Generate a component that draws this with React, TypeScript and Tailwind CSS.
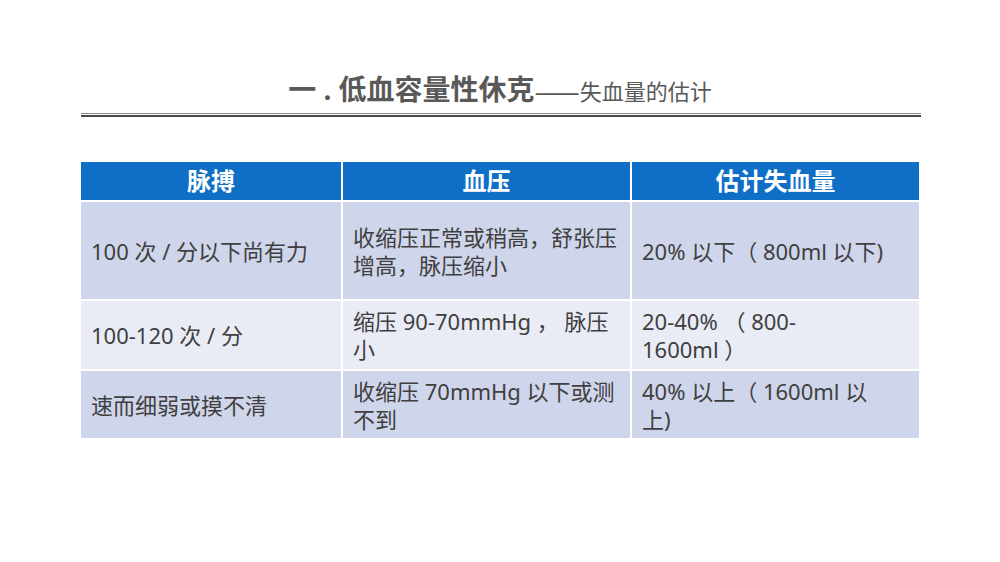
import React from "react";

const rows: { a: React.ReactNode; b: React.ReactNode; c: React.ReactNode; h: string; bg: string }[] = [
  {
    a: "100 次 / 分以下尚有力",
    b: (
      <>
        收缩压正常或稍高，舒张压
        <br />
        增高，脉压缩小
      </>
    ),
    c: "20% 以下（ 800ml 以下)",
    h: "h-[97px]",
    bg: "bg-[#cfd5ea]",
  },
  {
    a: "100-120 次 / 分",
    b: (
      <>
        缩压 90-70mmHg ， 脉压
        <br />
        小
      </>
    ),
    c: (
      <>
        20-40% （ 800-
        <br />
        1600ml ）
      </>
    ),
    h: "h-[68px]",
    bg: "bg-[#e9ebf5]",
  },
  {
    a: "速而细弱或摸不清",
    b: (
      <>
        收缩压 70mmHg 以下或测
        <br />
        不到
      </>
    ),
    c: (
      <>
        40% 以上（ 1600ml 以
        <br />
        上)
      </>
    ),
    h: "h-[67px]",
    bg: "bg-[#cfd5ea]",
  },
];

export default function App() {
  return (
    <div
      className="w-[1000px] h-[562px] bg-white overflow-hidden pt-[70px]"
      style={{ fontFamily: '"Noto Sans", "Noto Sans CJK SC", sans-serif' }}
    >
      <div className="h-[38px] flex items-baseline justify-center text-[#595959]">
        <span className="text-[28px] font-bold leading-[38px]">一 . 低血容量性休克</span>
        <span
          className="text-[22px] leading-[38px]"
          style={{ fontFamily: '"Noto Sans CJK SC", sans-serif' }}
        >
          <span className="text-[27px] relative top-[2px]">——</span>失血量的估计
        </span>
      </div>
      <div className="ml-[81px] w-[840px] mt-[5px]">
        <div className="h-[1px] bg-[#8a8a8a]" />
        <div className="h-[1px]" />
        <div className="h-[2px] bg-[#4a4a4a]" />
      </div>
      <div className="ml-[81px] mt-[45px] w-[838px] grid grid-cols-[260px_287px_287px] gap-[2px] bg-white text-[#3f3f3f] text-[22px] leading-[28px]">
        <div className="h-[38px] bg-[#0f6fc6] text-white font-bold text-[24px] flex items-center justify-center">脉搏</div>
        <div className="h-[38px] bg-[#0f6fc6] text-white font-bold text-[24px] flex items-center justify-center">血压</div>
        <div className="h-[38px] bg-[#0f6fc6] text-white font-bold text-[24px] flex items-center justify-center">估计失血量</div>
        {rows.map((r, i) => (
          <React.Fragment key={i}>
            <div className={`${r.h} ${r.bg} flex items-center pl-[10px] whitespace-nowrap`}>{r.a}</div>
            <div className={`${r.h} ${r.bg} flex items-center pl-[10px] whitespace-nowrap`}>
              <div>{r.b}</div>
            </div>
            <div className={`${r.h} ${r.bg} flex items-center pl-[10px] whitespace-nowrap`}>
              <div>{r.c}</div>
            </div>
          </React.Fragment>
        ))}
      </div>
    </div>
  );
}
